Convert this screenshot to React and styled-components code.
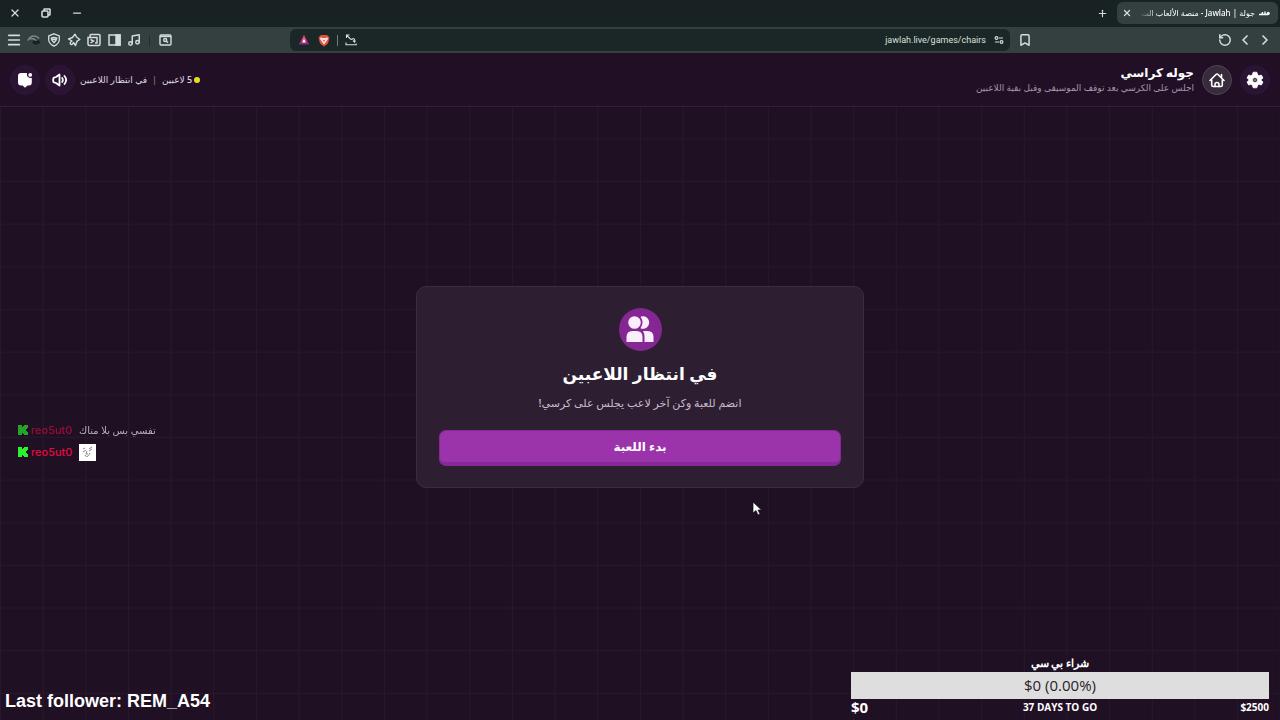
import styled, { createGlobalStyle } from "styled-components";
import {
  ChevronLeft,
  ChevronRight,
  Bookmark,
  Menu,
  Minus,
  Music,
  Plus,
  RotateCcw,
  X,
} from "lucide-react";

const GlobalStyle = createGlobalStyle`
  * {
    box-sizing: border-box;
  }

  body {
    margin: 0;
    background: #1f1023;
    color: #fff;
    font-family: "Noto Sans", "DejaVu Sans", sans-serif;
  }

  h1, h2, p {
    margin: 0;
  }

  button {
    padding: 0;
    border: 0;
    background: none;
    color: inherit;
    font: inherit;
  }
`;

const RestoreIcon = () => (
  <svg width="10" height="10" viewBox="0 0 10 10" fill="none" stroke="currentColor" strokeWidth="1.6">
    <rect x="1" y="3" width="6" height="6" rx="1" />
    <path d="M3 3V1.5Q3 1 3.5 1H8.5Q9 1 9 1.5V6.5Q9 7 8.5 7H7" />
  </svg>
);

const WingIcon = () => (
  <svg width="14" height="14" viewBox="0 0 14 14" fill="none" stroke="#7d8887" strokeWidth="1.6">
    <path d="M1 7.5Q3 3 7 3Q10 3 12 5.5" />
    <path d="M2.5 6Q6 4.500 9 7.500" />
    <path d="M6 8.5Q9.5 11.5 12.5 8" stroke="#182223" strokeWidth="3.4" />
  </svg>
);

const ShieldIcon = () => (
  <svg width="14" height="14" viewBox="0 0 14 14" fill="none" stroke="currentColor" strokeWidth="1.3">
    <path d="M7 .8L12.300 3V7Q11.800 11 7 13.200Q2.200 11 1.700 7V3Z" />
    <path d="M4.2 5.2Q7 3.8 9.800 5.200L9 7.500L7 9.800L5 7.500ZM4.500 6.500H9.500" />
  </svg>
);

const ExtensionIcon = () => (
  <svg width="14" height="14" viewBox="0 0 14 14" fill="none" stroke="currentColor" strokeWidth="1.4" strokeLinejoin="round">
    <path d="M8 1.200L9.500 4L12.800 6.500L10 8.200L8.500 12.500L6.500 9.500Q5 12.500 3.500 11Q2.500 9.500 5 8L1.500 6L5.500 4.500Z" />
  </svg>
);

const WalletIcon = () => (
  <svg width="14" height="14" viewBox="0 0 14 14" fill="none" stroke="currentColor" strokeWidth="1.5">
    <path d="M3 4V2.5Q3 1.500 4 1.500H12Q13 1.500 13 2.500V11Q13 12.500 11.500 12.500H2.500Q1 12.500 1 11V4.500H10V10H8" />
    <path d="M3.500 6.500L6.500 8L3.500 10" />
  </svg>
);

const SidebarIcon = () => (
  <svg width="13" height="12" viewBox="0 0 13 12" fill="none" stroke="currentColor" strokeWidth="1.5">
    <rect x="1" y="1" width="11" height="10" />
    <path d="M8 1H12V11H8Z" fill="currentColor" />
  </svg>
);

const SearchTabsIcon = () => (
  <svg width="13" height="12" viewBox="0 0 13 12" fill="none" stroke="currentColor" strokeWidth="1.4">
    <rect x="1" y="1" width="11" height="10" rx="1" />
    <path d="M1 2.5H12" />
    <circle cx="6.2" cy="6" r="1.5" />
    <path d="M7.3 7.1L9 8.8" />
  </svg>
);

const RewardsIcon = () => (
  <svg width="12" height="12" viewBox="0 0 12 12">
    <path d="M6 1L11.500 10.500H.5Z" fill="#8c2c7c" />
    <path d="M6 1L8.5 7H3.5Z" fill="#e35061" />
    <path d="M6 5L8 8.5H4Z" fill="#fff" />
  </svg>
);

const BraveIcon = () => (
  <svg width="12" height="13" viewBox="0 0 12 13">
    <path d="M3 1H9L11.5 3.5L10 9.5L6 12.5L2 9.5L.5 3.5Z" fill="#e2513f" />
    <path d="M2.5 3.500L5 4H7L9.500 3.500L10 5L7.500 8.500L6 10.500L4.500 8.500L2 5Z" fill="#ffe5dd" />
    <path d="M4.5 5.5L6 6.2L7.500 5.500L6 8Z" fill="#e2513f" />
  </svg>
);

const ShareIcon = () => (
  <svg width="12" height="12" viewBox="0 0 12 12" fill="none" stroke="currentColor" strokeWidth="1.1">
    <path d="M4.500 1H1.500V4M1.500 1.200L5.500 5Q7 6 8 4.500Q10 4.500 10 8M8 6.500L10 8.500" />
    <path d="M1 8.500V10.800H11.300V9.500" />
  </svg>
);

const SiteSettingsIcon = () => (
  <svg width="10" height="10" viewBox="0 0 10 10" fill="none" stroke="currentColor" strokeWidth="1.2">
    <circle cx="2.500" cy="3" r="1.400" />
    <path d="M5 3H9M1 7H5" />
    <circle cx="7.500" cy="7" r="1.400" />
  </svg>
);

const SiteLogo = () => (
  <svg width="11" height="7" viewBox="0 0 11 7" fill="none" stroke="currentColor" strokeWidth="1.4">
    <path d="M0 4.500H2Q3.5 4.500 3.500 2V4.500H6V1.500V4.500H8.500Q10.500 4.500 10 3Q9 1.500 8 4.500" />
  </svg>
);

const ChatIcon = () => (
  <svg width="16" height="16" viewBox="0 0 16 16" fill="currentColor">
    <path d="M4 1H10Q9.500 3 10.500 4.500Q12 6.200 14.800 6V10.500Q14.800 13.500 12 13.500H10.500L8 15.800L5.500 13.500H4Q1 13.500 1 10.500V4Q1 1 4 1Z" />
    <circle cx="13.2" cy="2.900" r="1.900" />
  </svg>
);

const SpeakerIcon = () => (
  <svg width="16" height="16" viewBox="0 0 16 16" fill="none" stroke="currentColor" strokeWidth="1.8" strokeLinejoin="round" strokeLinecap="round">
    <path d="M1.200 7Q1.200 5.700 2.500 5.500L4 5L7.500 2.500V13.500L4 11L2.500 10.500Q1.200 10.300 1.200 9Z" />
    <path d="M10.200 6Q11.500 8 10.200 10M12.500 4Q15.800 8 12.500 12" />
  </svg>
);

const HomeIcon = () => (
  <svg width="16" height="16" viewBox="0 0 16 16" fill="none" stroke="currentColor" strokeWidth="1.6" strokeLinejoin="round" strokeLinecap="round">
    <path d="M1 8.500L7 2.500Q8 1.500 9 2.500L15 8.500M2.700 7.500V13Q2.700 14.500 4.200 14.500H11.800Q13.300 14.500 13.300 13V7.500M12.500 5.500V2.500" />
    <path d="M6 14.500V12.500Q6 10.500 8 10.500Q10 10.500 10 12.500V14.500" />
  </svg>
);

const GearIcon = () => (
  <svg width="18" height="18" viewBox="0 0 18 18" fill="currentColor">
    <path
      fillRule="evenodd"
      strokeLinejoin="round"
      stroke="currentColor"
      strokeWidth=".8"
      d="M7.200 1.200H10.800L11.600 3.800L13.200 4.700L15.300 4L17 7L15.200 8.500V9.500L17 11L15.300 14L13.200 13.300L11.600 14.200L10.800 16.800H7.200L6.400 14.200L4.800 13.300L2.700 14L1 11L2.800 9.500V8.500L1 7L2.700 4L4.800 4.700L6.400 3.800ZM9 6.500A2.500 2.500 0 1 0 9 11.500A2.500 2.500 0 1 0 9 6.500Z"
    />
    <circle cx="9" cy="9" r="1.2" fill="#817486" />
  </svg>
);

const PlayersIcon = () => (
  <svg width="28" height="26" viewBox="0 0 28 26" fill="#fbeefc">
    <circle cx="8.5" cy="6.500" r="6.300" />
    <path d="M14.500 .8A6.200 6.200 0 1 1 14.500 12.200Q18.500 6.500 14.500 .8Z" />
    <path d="M.5 26V21Q.5 15 6.500 15H10.500Q16.500 15 16.500 21V26Z" />
    <path d="M17 15H21.500Q27.500 15 27.500 21V26H18.500V21Q18.500 17.500 17 15Z" />
  </svg>
);

const KickIcon = () => (
  <svg width="10" height="10" viewBox="0 0 10 10" fill="#2bf32b">
    <path d="M0 0H4V2H5V1H6V0H10V3H9V4H8V6H9V7H10V10H6V9H5V8H4V10H0Z" />
  </svg>
);

const EmoteIcon = () => (
  <svg width="17" height="17" viewBox="0 0 17 17" fill="none" stroke="#8c888e">
    <rect width="17" height="17" fill="#fff" stroke="none" />
    <path d="M4 5L6 4M10 5L13 3M4 8L7 6M10 7L13 5M8 7L7 10H9M6 11Q8 15 11 9" />
  </svg>
);

const PointerIcon = () => (
  <svg width="10" height="15" viewBox="0 0 10 15">
    <path d="M1 1V12L4 9.5L6 14L8 13L6 9H9.5Z" fill="#fff" stroke="#120a16" strokeWidth=".7" />
  </svg>
);

// browser shortcuts, left to right
const shortcuts = [
  { name: "Menu", icon: <Menu size={16} strokeWidth={2.5} /> },
  { name: "Leo", icon: <WingIcon /> },
  { name: "Shield", icon: <ShieldIcon /> },
  { name: "Extensions", icon: <ExtensionIcon /> },
  { name: "Wallet", icon: <WalletIcon /> },
  { name: "Sidebar", icon: <SidebarIcon /> },
  { name: "Media", icon: <Music size={14} strokeWidth={2.5} /> },
];

const App = () => {
  return (
    <Page>
      <GlobalStyle />
      <TabBar>
        <WindowControls>
          <IconButton aria-label="Close window"><X size={12} strokeWidth={2.5} /></IconButton>
          <IconButton aria-label="Restore"><RestoreIcon /></IconButton>
          <IconButton aria-label="Minimize"><Minus size={12} strokeWidth={2.5} /></IconButton>
        </WindowControls>
        <Tabs>
          <IconButton aria-label="New tab"><Plus size={11} strokeWidth={2.5} /></IconButton>
          <Tab>
            <IconButton aria-label="Close tab"><X size={10} strokeWidth={3} /></IconButton>
            <TabTitle dir="rtl">جولة | Jawlah - منصة الألعاب الت</TabTitle>
            <SiteLogo />
          </Tab>
        </Tabs>
      </TabBar>

      <Toolbar>
        <Shortcuts>
          {shortcuts.map(({ name, icon }) => (
            <IconButton key={name} aria-label={name}>{icon}</IconButton>
          ))}
          <ToolbarDivider />
          <IconButton aria-label="Search tabs"><SearchTabsIcon /></IconButton>
        </Shortcuts>
        <AddressBar>
          <IconButton aria-label="Rewards"><RewardsIcon /></IconButton>
          <IconButton aria-label="Brave shields"><BraveIcon /></IconButton>
          <AddressDivider />
          <IconButton aria-label="Share"><ShareIcon /></IconButton>
          <Address aria-label="Address" defaultValue="jawlah.live/games/chairs" />
          <IconButton aria-label="Site settings"><SiteSettingsIcon /></IconButton>
        </AddressBar>
        <Navigation>
          <IconButton aria-label="Bookmark"><Bookmark size={14} strokeWidth={2.5} /></IconButton>
          <History>
            <IconButton aria-label="Reload"><RotateCcw size={14} strokeWidth={2.5} /></IconButton>
            <IconButton aria-label="Forward"><ChevronLeft size={16} strokeWidth={2.5} /></IconButton>
            <IconButton aria-label="Back"><ChevronRight size={16} strokeWidth={2.5} /></IconButton>
          </History>
        </Navigation>
      </Toolbar>

      <Game>
        <GameHeader>
          <HeaderSide $gap={5}>
            <RoundButton aria-label="Chat"><ChatIcon /></RoundButton>
            <RoundButton aria-label="Sound"><SpeakerIcon /></RoundButton>
            <Status dir="rtl">
              <Dot />
              <span>5 لاعبين</span>
              <StatusDivider>|</StatusDivider>
              <span>في انتظار اللاعبين</span>
            </Status>
          </HeaderSide>
          <HeaderSide $gap={8}>
            <div dir="rtl">
              <GameName>جوله كراسي</GameName>
              <GameHint>اجلس على الكرسي بعد توقف الموسيقى وقبل بقية اللاعبين</GameHint>
            </div>
            <RoundButton aria-label="Home" $outlined><HomeIcon /></RoundButton>
            <RoundButton aria-label="Settings"><GearIcon /></RoundButton>
          </HeaderSide>
        </GameHeader>

        <Stage>
          <LobbyCard dir="rtl">
            <PlayersBadge><PlayersIcon /></PlayersBadge>
            <LobbyTitle>في انتظار اللاعبين</LobbyTitle>
            <LobbyText>انضم للعبة وكن آخر لاعب يجلس على كرسي!</LobbyText>
            <StartButton>بدء اللعبة</StartButton>
          </LobbyCard>
        </Stage>

        <ChatOverlay>
          <ChatLine $faded>
            <KickIcon />
            <UserName>reo5ut0</UserName>
            <span dir="rtl">تفسي بس بلا مناك</span>
          </ChatLine>
          <ChatLine>
            <KickIcon />
            <UserName>reo5ut0</UserName>
            <EmoteIcon />
          </ChatLine>
        </ChatOverlay>

        <Follower>Last follower: REM_A54</Follower>

        <Goal>
          <GoalTitle dir="rtl">شراء بي سي</GoalTitle>
          <GoalBar>$0 (0.00%)</GoalBar>
          <GoalFooter>
            <GoalStart>$0</GoalStart>
            <span>37 DAYS TO GO</span>
            <GoalEnd>$2500</GoalEnd>
          </GoalFooter>
        </Goal>

        <Pointer><PointerIcon /></Pointer>
      </Game>
    </Page>
  );
};

const Page = styled.div`
  display: flex;
  flex-direction: column;
  min-height: 100vh;
  overflow: hidden;
`;

const TabBar = styled.header`
  display: flex;
  justify-content: space-between;
  height: 27px;
  padding: 2px 2px 3px 8px;
  background: #182223;
`;

const WindowControls = styled.div`
  display: flex;
  align-items: center;
  gap: 17px;
`;

const IconButton = styled.button`
  display: flex;
  align-items: center;
  justify-content: center;
  flex: none;
  width: 14px;
  color: #d5dcdb;

  svg {
    flex: none;
  }
`;

const Tabs = styled.div`
  display: flex;
  align-items: center;
  gap: 8px;
`;

const Tab = styled.div`
  display: flex;
  align-items: center;
  gap: 4px;
  height: 22px;
  padding: 0 8px 0 3px;
  border-radius: 6px;
  background: #343f40;
`;

const TabTitle = styled.span`
  min-width: 117px;
  font-size: 8px;
  font-weight: 500;
  line-height: 20px;
  white-space: nowrap;
  mask-image: linear-gradient(to right, transparent, #000 20px);
`;

const Toolbar = styled.nav`
  display: grid;
  grid-template-columns: 290px minmax(0, 1fr) 270px;
  align-items: center;
  height: 26px;
  background: #343f40;
`;

const Shortcuts = styled.div`
  display: flex;
  align-items: center;
  gap: 6px;
  padding-left: 7px;
`;

const ToolbarDivider = styled.span`
  width: 1px;
  height: 11px;
  margin: 0 2px;
  background: #222d2e;
`;

const AddressBar = styled.div`
  display: flex;
  align-items: center;
  gap: 6px;
  height: 22px;
  padding: 0 4px 0 7px;
  border-radius: 6px;
  background: #1b2627;
`;

const AddressDivider = styled.span`
  width: 1px;
  height: 11px;
  background: #717c7c;
`;

const Address = styled.input`
  flex: 1;
  min-width: 0;
  padding: 0;
  border: 0;
  outline: 0;
  background: none;
  color: #d9e0df;
  font-family: Roboto, "Noto Sans", sans-serif;
  font-size: 9px;
  text-align: right;
`;

const Navigation = styled.div`
  display: flex;
  justify-content: space-between;
  padding: 0 8px;
`;

const History = styled.div`
  display: flex;
  align-items: center;
  gap: 6px;
`;

const Game = styled.main`
  position: relative;
  display: flex;
  flex: 1;
  flex-direction: column;
  background-color: #1f1023;
  background-image:
    linear-gradient(to right, #27182b 1px, transparent 1px),
    linear-gradient(to bottom, #27182b 1px, transparent 1px);
  background-size: calc(100vw / 30) calc(100vw / 30);
`;

const GameHeader = styled.header`
  display: flex;
  align-items: center;
  justify-content: space-between;
  height: 54px;
  padding: 0 10px;
  border-bottom: 1px solid #302034;
  background: #200f25;
`;

const HeaderSide = styled.div`
  display: flex;
  align-items: center;
  gap: ${(props) => props.$gap}px;
`;

const RoundButton = styled.button`
  display: flex;
  align-items: center;
  justify-content: center;
  width: 30px;
  height: 30px;
  border: 1px solid ${(props) => (props.$outlined ? "#514456" : "#2d1638")};
  border-radius: 50%;
  background: ${(props) => (props.$outlined ? "#382b3c" : "#2b1433")};
`;

const Status = styled.div`
  display: flex;
  align-items: center;
  color: #dfd7e2;
  font-size: 9px;
  font-weight: 500;
  line-height: 16px;
`;

const Dot = styled.span`
  width: 6px;
  height: 6px;
  margin-left: 2px;
  border-radius: 50%;
  background: #e4e01c;
`;

const StatusDivider = styled.span`
  margin: 0 5px;
  color: #85758b;
`;

const GameName = styled.h1`
  font-size: 12px;
  font-weight: 800;
  line-height: 16px;
`;

const GameHint = styled.p`
  color: #a596aa;
  font-size: 9px;
  font-weight: 500;
  line-height: 14px;
`;

const Stage = styled.section`
  display: flex;
  flex: 1;
  align-items: center;
  justify-content: center;
  padding-bottom: 54px;
`;

const LobbyCard = styled.div`
  display: flex;
  flex-direction: column;
  align-items: center;
  width: 35%;
  padding: 21px 22px;
  border: 1px solid #3b2c3f;
  border-radius: 10px;
  background: #2d1e31;
`;

const PlayersBadge = styled.div`
  display: flex;
  align-items: center;
  justify-content: center;
  width: 43px;
  height: 43px;
  border-radius: 50%;
  background: #842793;
`;

const LobbyTitle = styled.h2`
  margin-top: 8px;
  font-size: 17px;
  line-height: 30px;
`;

const LobbyText = styled.p`
  margin-top: 4px;
  color: #c8bdcc;
  font-size: 11px;
  font-weight: 500;
  line-height: 20px;
`;

const StartButton = styled.button`
  width: 100%;
  height: 36px;
  margin-top: 17px;
  border: 1px solid #862896;
  border-bottom-width: 4px;
  border-radius: 7px;
  background: #9b33ab;
  font-size: 12px;
  font-weight: 700;
`;

const ChatOverlay = styled.div`
  position: absolute;
  top: 366px;
  left: 18px;
`;

const ChatLine = styled.div`
  display: flex;
  align-items: center;
  gap: 3px;
  height: 22px;
  font-size: 10px;
  opacity: ${(props) => (props.$faded ? 0.65 : 1)};
`;

const UserName = styled.span`
  min-width: 45px;
  color: #e10b40;
  font-family: Inter, sans-serif;
  font-size: 11px;
  font-weight: 500;
`;

const Follower = styled.p`
  position: absolute;
  bottom: 8px;
  left: 5px;
  font-family: "Liberation Sans", sans-serif;
  font-size: 18px;
  font-weight: 700;
  line-height: 22px;
`;

const Goal = styled.section`
  position: absolute;
  right: 11px;
  bottom: 3px;
  width: 418px;
  font-family: "Open Sans", "Noto Sans", sans-serif;
`;

const GoalTitle = styled.h2`
  font-size: 11px;
  line-height: 18px;
  text-align: center;
`;

const GoalBar = styled.div`
  height: 27px;
  background: #dedede;
  color: #27232a;
  font-size: 15px;
  line-height: 27px;
  text-align: center;
`;

const GoalFooter = styled.div`
  display: grid;
  grid-template-columns: 1fr auto 1fr;
  height: 18px;
  font-size: 10px;
  font-weight: 700;
  line-height: 16px;
`;

const GoalStart = styled.span`
  font-size: 15px;
`;

const GoalEnd = styled.span`
  text-align: right;
`;

const Pointer = styled.div`
  position: absolute;
  top: 446px;
  left: 752px;
`;

export default App;
